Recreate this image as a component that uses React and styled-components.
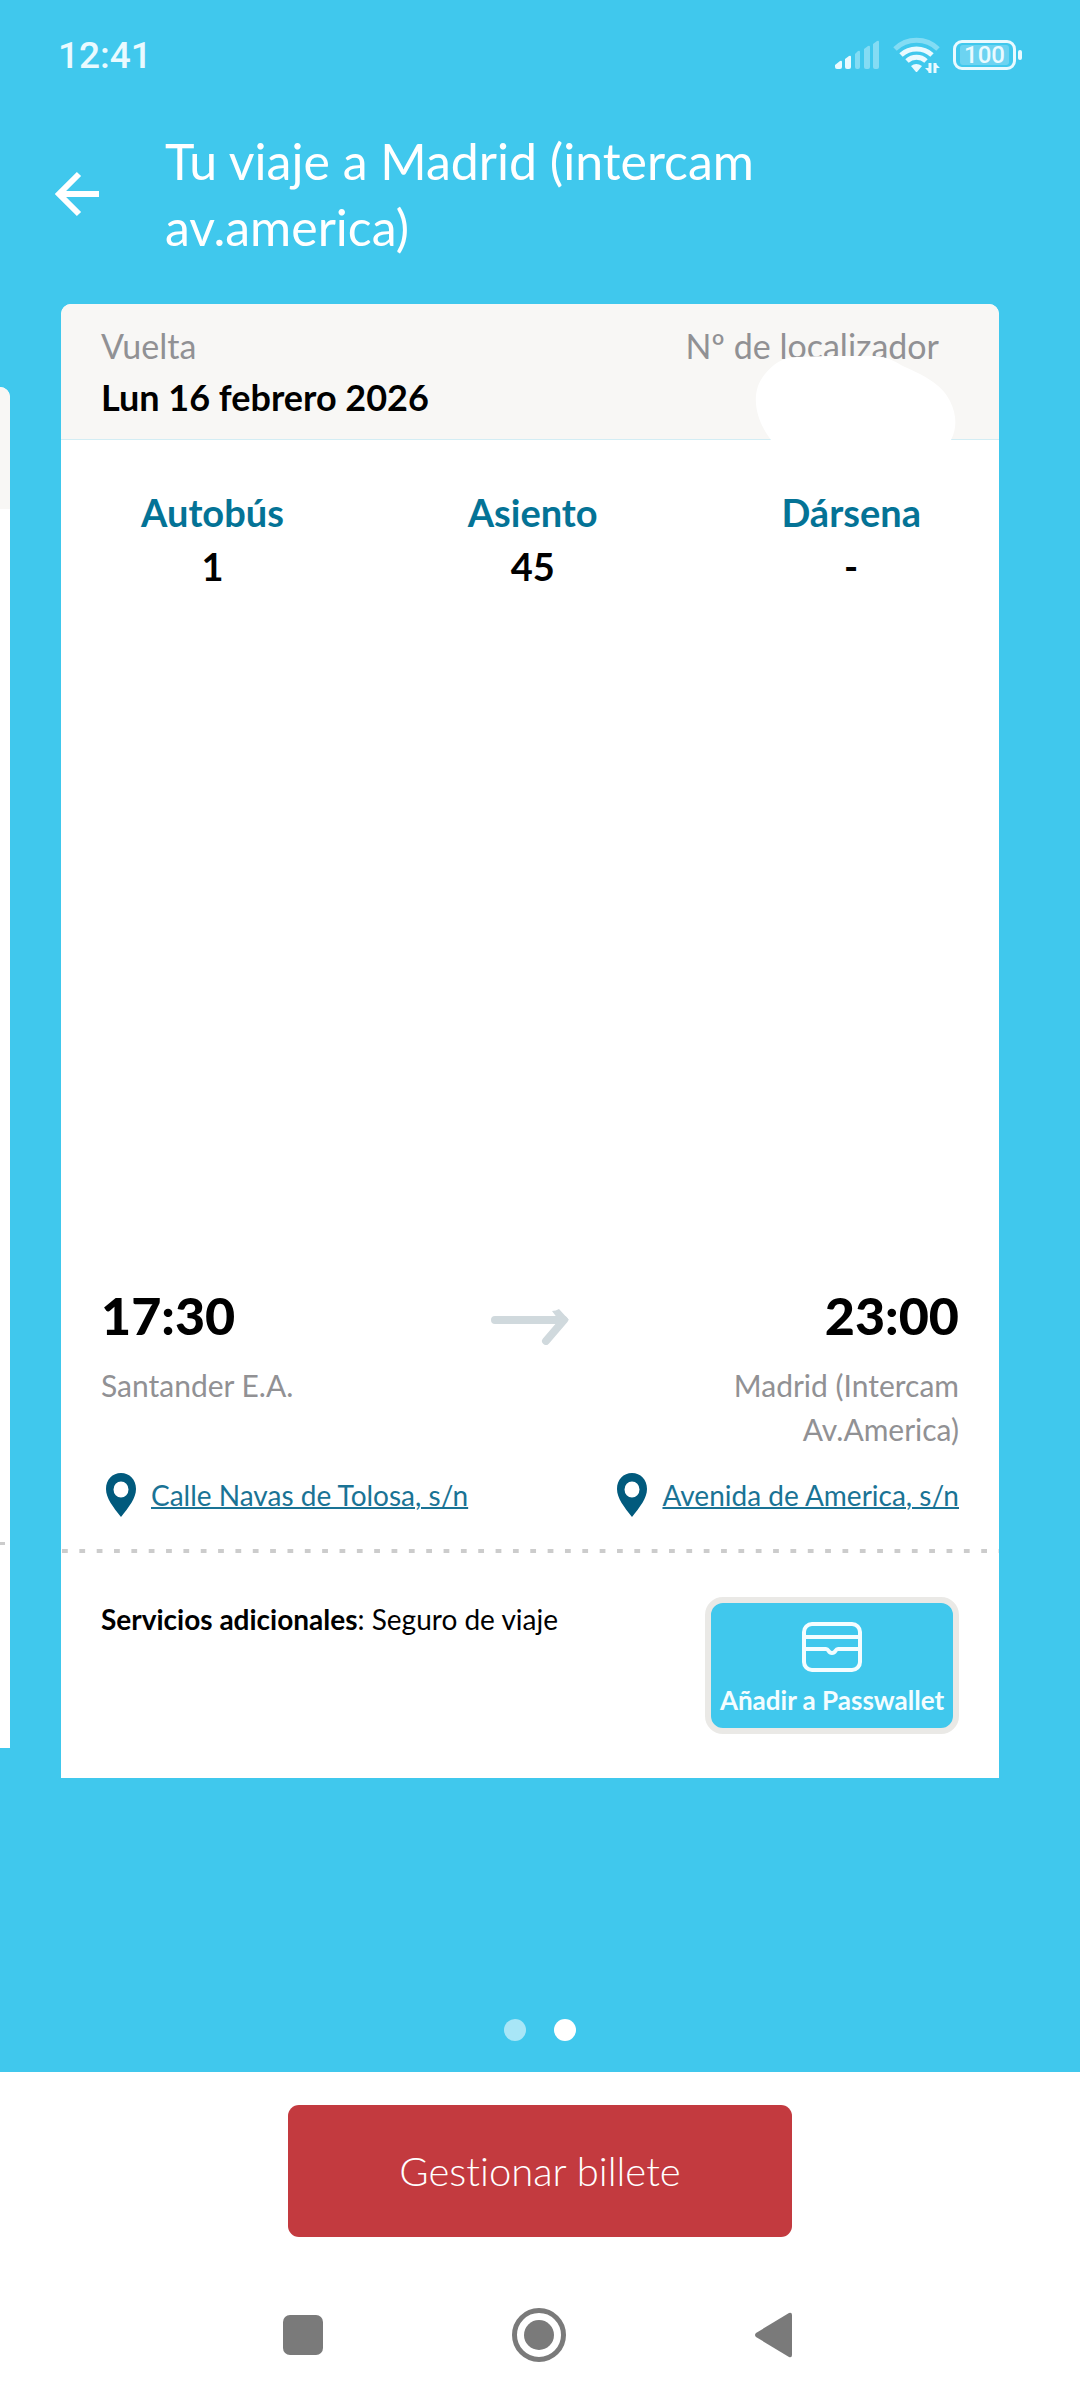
import React from 'react';
import styled, { createGlobalStyle } from 'styled-components';

const GlobalStyle = createGlobalStyle`
  * {
    box-sizing: border-box;
  }

  body {
    margin: 0;
    background: #fff;
    font-family: Lato, 'Liberation Sans', sans-serif;
    font-variant-ligatures: none;
  }

  p, h1, h2, dl, dt, dd {
    margin: 0;
  }

  button {
    font-family: inherit;
    font-variant-ligatures: none;
    cursor: pointer;
  }
`;

const Screen = styled.div`
  display: flex;
  flex-direction: column;
  min-height: 100vh;
`;

const Trip = styled.div`
  display: flex;
  flex-direction: column;
  flex: 1;
  background: #40c8ed;
`;

const StatusBar = styled.div`
  display: flex;
  align-items: center;
  justify-content: space-between;
  height: 110px;
  padding: 0 58px;
  color: #e9faff;
  font-family: Roboto, sans-serif;
  font-size: 37px;
  font-weight: 500;
`;

const StatusIcons = styled.div`
  display: flex;
  align-items: center;
  gap: 13px;
`;

const Battery = styled.div`
  display: flex;
  align-items: center;
  gap: 2px;
`;

const BatteryCell = styled.span`
  width: 63px;
  height: 30px;
  border: 3px solid #e9faff;
  border-radius: 9px;
  padding: 2px 4px;
`;

const BatteryLevel = styled.span`
  display: block;
  height: 20px;
  border-radius: 3px;
  background: #6cd3f1;
  font-size: 24px;
  line-height: 20px;
  text-align: center;
`;

const BatteryTip = styled.span`
  width: 4px;
  height: 10px;
  border-radius: 2px;
  background: #e9faff;
`;

const Header = styled.header`
  display: flex;
  align-items: center;
  gap: 60px;
  padding: 18px 200px 44px 50px;
`;

const BackButton = styled.button`
  display: flex;
  padding: 0;
  border: 0;
  background: none;
`;

const Title = styled.h1`
  color: #fff;
  font-size: 50px;
  font-weight: 400;
  line-height: 66px;
`;

const Carousel = styled.main`
  display: grid;
  grid-template-columns: 10px minmax(0, 1fr);
  column-gap: 51px;
  align-items: start;
  padding-right: 81px;
`;

const PreviousCard = styled.div`
  display: flex;
  flex-direction: column;
  height: 1361px;
  margin-top: 83px;
  border-radius: 0 10px 0 0;
  background: #fff;
  overflow: hidden;
`;

const PreviousHeader = styled.div`
  height: 122px;
  background: #f8f7f5;
`;

const PreviousFold = styled.div`
  width: 5px;
  height: 3px;
  margin-top: 1033px;
  background: #ccc;
`;

const Card = styled.article`
  border-radius: 10px 10px 0 0;
  background: #fff;
  overflow: hidden;
`;

const CardHeader = styled.section`
  position: relative;
  display: flex;
  justify-content: space-between;
  height: 136px;
  padding: 17px 60px 0 40px;
  border-bottom: 1px solid #d3edf4;
  background: #f8f7f5;
`;

const Label = styled.p`
  color: #919194;
  font-size: 34px;
  line-height: 50px;
`;

const DateText = styled.h2`
  font-size: 36px;
  font-weight: 700;
  line-height: 52px;
`;

const Cover = styled.svg`
  position: absolute;
  right: 43px;
  bottom: -1px;
`;

const Details = styled.dl`
  display: flex;
  justify-content: space-between;
  height: 837px;
  padding: 45px 78px 0 80px;
`;

const Detail = styled.div`
  text-align: center;

  dt {
    color: #047396;
    font-size: 38px;
    font-weight: 700;
    line-height: 54px;
  }

  dd {
    font-size: 38px;
    font-weight: 700;
    line-height: 54px;
  }
`;

const Route = styled.section`
  display: grid;
  grid-template-columns: 1fr 80px 1fr;
  column-gap: 40px;
  padding: 0 40px;
`;

const Stop = styled.div`
  display: flex;
  flex-direction: column;
  text-align: ${props => (props.$end ? 'right' : 'left')};
`;

const Time = styled.time`
  font-size: 52px;
  font-weight: 900;
  line-height: 76px;
`;

const Place = styled.p`
  height: 88px;
  margin-top: 10px;
  color: #919194;
  font-size: 30px;
  line-height: 44px;
`;

const ArrowBox = styled.div`
  padding-top: 28px;
`;

const Addresses = styled.section`
  display: flex;
  justify-content: space-between;
  padding: 22px 40px 32px 45px;
`;

const Address = styled.div`
  display: flex;
  align-items: center;
  gap: 15px;
`;

const AddressLink = styled.a`
  color: #1a7395;
  font-size: 28px;
  line-height: 44px;
  text-decoration-thickness: 2px;
`;

const Fold = styled.div`
  height: 4px;
  margin-left: 1px;
  background: linear-gradient(90deg, #ccc 6px, transparent 6px) 0 0 / calc(100% / 54) 4px;
`;

const Extras = styled.section`
  display: flex;
  align-items: flex-start;
  justify-content: space-between;
  padding: 44px 40px;
`;

const Services = styled.p`
  font-size: 28px;
  line-height: 44px;
`;

const WalletButton = styled.button`
  display: flex;
  flex-direction: column;
  align-items: center;
  gap: 11px;
  width: 254px;
  height: 137px;
  padding: 19px 0 0;
  border: 6px solid #eae9e6;
  border-radius: 18px;
  background: #40c8ed;
  color: #f4fdff;
  font-size: 26px;
  font-weight: 700;
  line-height: 34px;
  white-space: nowrap;
`;

const Dots = styled.div`
  display: flex;
  justify-content: center;
  gap: 28px;
  margin-top: auto;
  padding-bottom: 31px;
`;

const Dot = styled.span`
  width: 22px;
  height: 22px;
  border-radius: 50%;
  background: ${props => (props.$active ? '#fff' : '#a8e6f7')};
`;

const Footer = styled.footer`
  display: flex;
  flex-direction: column;
  align-items: center;
  padding-top: 33px;
`;

const ManageButton = styled.button`
  width: 504px;
  height: 132px;
  border: 0;
  border-radius: 11px;
  background: #c33a3f;
  color: #fff;
  font-size: 40px;
  font-weight: 300;
`;

const SystemNav = styled.nav`
  display: flex;
  align-items: center;
  justify-content: space-between;
  width: 514px;
  height: 163px;
  padding: 32px 4px 0 0;
`;

const NavButton = styled.button`
  display: flex;
  padding: 0;
  border: 0;
  background: none;
`;

const details = [
  { label: 'Autobús', value: '1' },
  { label: 'Asiento', value: '45' },
  { label: 'Dársena', value: '-' },
];

const SignalIcon = () => (
  <svg width="45" height="30" viewBox="0 0 45 30" fill="#e9faff">
    <path d="M0 25l5-4q2-1 2 1v5q0 2-2 2H2q-2 0-2-2z" />
    <path d="M10 19l4-3q2-1 2 1v10q0 2-2 2h-2q-2 0-2-2z" />
    <g opacity="0.4">
      <path d="M20 14l3-3q2-1 2 1v15q0 2-2 2h-1q-2 0-2-2z" />
      <path d="M29 9l4-3q2-1 2 1v20q0 2-2 2h-2q-2 0-2-2z" />
      <path d="M38 4l4-3q2-1 2 1v25q0 2-2 2h-2q-2 0-2-2z" />
    </g>
  </svg>
);

const WifiIcon = () => (
  <svg width="47" height="36" viewBox="0 0 47 36" fill="none" stroke="#e9faff" strokeWidth="5">
    <path d="M2 12a31 31 0 0 1 43 0" opacity="0.4" />
    <path d="M8 18a23 23 0 0 1 31 0" />
    <path d="M14 24a14 14 0 0 1 19 0" />
    <path d="M18 29q5-4 11 0l-5 6h-1z" fill="#e9faff" stroke="none" />
    <path d="M37 26v10M42 26v10" strokeWidth="3" />
    <path d="M32 31l5 5v-5zM47 31l-5-5v5z" fill="#e9faff" stroke="none" />
  </svg>
);

const BackIcon = () => (
  <svg width="55" height="54" viewBox="0 0 55 54" fill="none" stroke="#fff" strokeWidth="6">
    <path d="M49 27H9M29 7L9 27l20 20" />
  </svg>
);

const RouteArrow = () => (
  <svg width="80" height="40" viewBox="0 0 80 40" fill="none" stroke="#d0d9dd" strokeWidth="8" strokeLinecap="round" strokeLinejoin="round">
    <path d="M5 15h68M56 36l18-21" />
    <path d="M62 6q4 0 7-2l10 11-8 3z" fill="#d0d9dd" stroke="none" />
  </svg>
);

const PinIcon = () => (
  <svg width="30" height="44" viewBox="0 0 30 44" fill="#015a7d" fillRule="evenodd">
    <path d="M15 0C6.500 0 0 6.500 0 16c0 9 7 18 15 28 8-10 15-19 15-28C30 6.500 23.500 0 15 0zm0 8.500a7.500 8 0 1 1 0 16 7.500 8 0 0 1 0-16z" />
  </svg>
);

const WalletIcon = () => (
  <svg width="60" height="50" viewBox="0 0 60 50" fill="none" stroke="#f4fdff" strokeWidth="4">
    <rect x="2" y="2" width="56" height="46" rx="8" />
    <path d="M2 15h56M2 27h22c3 0 2 4 6 4s3-4 6-4h22" />
  </svg>
);

const App = () => (
  <Screen>
    <GlobalStyle />
    <Trip>
      <StatusBar>
        <span>12:41</span>
        <StatusIcons>
          <SignalIcon />
          <WifiIcon />
          <Battery>
            <BatteryCell>
              <BatteryLevel>100</BatteryLevel>
            </BatteryCell>
            <BatteryTip />
          </Battery>
        </StatusIcons>
      </StatusBar>

      <Header>
        <BackButton type="button" aria-label="Volver">
          <BackIcon />
        </BackButton>
        <Title>Tu viaje a Madrid (intercam av.america)</Title>
      </Header>

      <Carousel>
        <PreviousCard>
          <PreviousHeader />
          <PreviousFold />
        </PreviousCard>
        <Card>
          <CardHeader>
            <div>
              <Label>Vuelta</Label>
              <DateText>Lun 16 febrero 2026</DateText>
            </div>
            <Label>Nº de localizador</Label>
            <Cover width="201" height="84" viewBox="0 0 201 84" fill="#fff">
              <path d="M16 84C-2 60-4 34 10 18 18 8 28 1 42 1 70 0 100-1 120 0c14 1 20 6 30 11 18 8 37 17 45 34 7 14 7 27 1 39z" />
            </Cover>
          </CardHeader>

          <Details>
            {details.map(({ label, value }) => (
              <Detail key={label}>
                <dt>{label}</dt>
                <dd>{value}</dd>
              </Detail>
            ))}
          </Details>

          <Route>
            <Stop>
              <Time>17:30</Time>
              <Place>Santander E.A.</Place>
            </Stop>
            <ArrowBox>
              <RouteArrow />
            </ArrowBox>
            <Stop $end>
              <Time>23:00</Time>
              <Place>Madrid (Intercam Av.America)</Place>
            </Stop>
          </Route>

          <Addresses>
            <Address>
              <PinIcon />
              <AddressLink href="#origen">Calle Navas de Tolosa, s/n</AddressLink>
            </Address>
            <Address>
              <PinIcon />
              <AddressLink href="#destino">Avenida de America, s/n</AddressLink>
            </Address>
          </Addresses>

          <Fold />

          <Extras>
            <Services>
              <strong>Servicios adicionales</strong>: Seguro de viaje
            </Services>
            <WalletButton type="button">
              <WalletIcon />
              Añadir a Passwallet
            </WalletButton>
          </Extras>
        </Card>
      </Carousel>

      <Dots>
        <Dot />
        <Dot $active />
      </Dots>
    </Trip>

    <Footer>
      <ManageButton type="button">Gestionar billete</ManageButton>
      <SystemNav>
        <NavButton type="button" aria-label="Recientes">
          <svg width="40" height="40" viewBox="0 0 40 40" fill="#7a7a7a">
            <rect width="40" height="40" rx="7" />
          </svg>
        </NavButton>
        <NavButton type="button" aria-label="Inicio">
          <svg width="54" height="54" viewBox="0 0 54 54" fill="#7a7a7a">
            <circle cx="27" cy="27" r="24.500" fill="none" stroke="#7a7a7a" strokeWidth="5" />
            <circle cx="27" cy="27" r="15" />
          </svg>
        </NavButton>
        <NavButton type="button" aria-label="Atrás">
          <svg width="38" height="46" viewBox="0 0 38 46" fill="#7a7a7a">
            <path d="M1 21L34 1q3-1 3 2v40q0 3-3 2L1 25q-2-2 0-4z" />
          </svg>
        </NavButton>
      </SystemNav>
    </Footer>
  </Screen>
);

export default App;
